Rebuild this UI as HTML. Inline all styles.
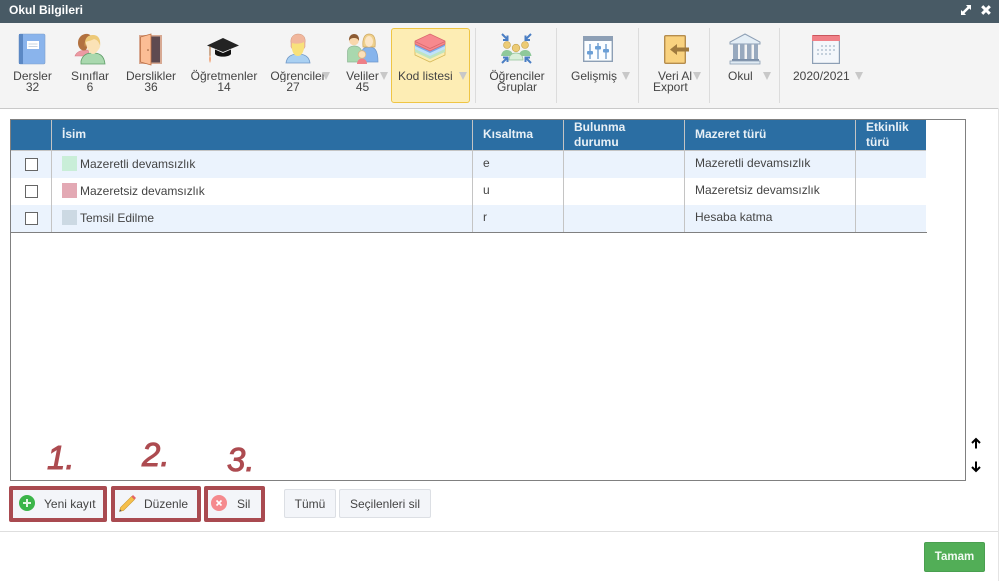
<!DOCTYPE html>
<html><head><meta charset="utf-8"><style>
html,body{margin:0;padding:0;background:#fff}
body{width:999px;height:581px;position:relative;overflow:hidden;font-family:"Liberation Sans",sans-serif;font-size:12px;color:#333}
.a{position:absolute;white-space:nowrap}
svg{position:absolute;overflow:visible}
.l{position:absolute;white-space:nowrap;line-height:11px;text-align:center;color:#444}
.tri{position:absolute;width:0;height:0;border-left:4.5px solid transparent;border-right:4.5px solid transparent;border-top:8px solid #c8c8c8}
.sep{position:absolute;top:28px;height:75px;width:1px;background:#dcdcdc}
.th{position:absolute;color:#e8f0f6;font-weight:bold;line-height:15px;font-size:12px;white-space:nowrap}
.cell{position:absolute;white-space:nowrap;line-height:14px;color:#444}
.vd{position:absolute;width:1px;background:#c4c4c4}
.cb{position:absolute;left:25px;width:11px;height:11px;border:1px solid #666;background:#fff}
.sw{position:absolute;left:62px;width:15px;height:15px}
.btn{position:absolute;top:489px;height:29px;box-sizing:border-box;background:#f3f5f9;border:1px solid #dcdfe4;border-radius:2px;line-height:28px;text-align:center;color:#444}
.red{position:absolute;box-sizing:border-box;border:4px solid #a94a50;border-radius:2px;background:#f3f5f9;top:486px;height:36px}
.num{position:absolute;color:#ad4b50;font-size:33px;font-style:italic;line-height:33px;white-space:nowrap;font-family:"Liberation Sans",sans-serif;-webkit-text-stroke:1px #ad4b50}
</style></head><body>

<div class="a" style="left:0;top:0;width:999px;height:23px;background:#485a65"></div>
<div class="a" style="left:9px;top:3px;color:#fff;font-weight:bold;line-height:14px">Okul Bilgileri</div>
<svg style="left:961px;top:5px" width="10" height="10" viewBox="0 0 10 10"><path d="M5 0H10V5L8.300 3.500L3.500 8.300L5 10H0V5L1.700 6.500L6.500 1.700Z" fill="#fff"/></svg>
<svg style="left:981px;top:5px" width="10" height="10" viewBox="0 0 10 10"><path d="M1.200 1.200L8.800 8.800M8.800 1.200L1.200 8.800" stroke="#fff" stroke-width="3"/></svg>

<div class="a" style="left:0;top:23px;width:999px;height:85px;background:#f4f4f4"></div>
<div class="a" style="left:0;top:108px;width:999px;height:1px;background:#c9c9c9"></div>
<div class="a" style="left:998px;top:108px;width:1px;height:473px;background:#e4e4e4"></div>

<!-- Dersler -->
<svg style="left:19px;top:34px" width="26" height="30" viewBox="0 0 26 30"><rect x="0" y="0" width="26" height="30" rx="1.500" fill="#8ab4ec" stroke="#7f9fca" stroke-width=".6"/><rect x="0" y="0" width="4" height="30" fill="#5b88c4"/><rect x="8" y="7" width="12" height="8" fill="#fff"/><path d="M9.500 10H18.500M9.500 12.500H18.500" stroke="#c9d5e2"/></svg>
<!-- Siniflar -->
<svg style="left:74px;top:33px" width="32" height="32" viewBox="0 0 32 32"><path d="M1 23C3 18 8 17 14 17L16 23Z" fill="#ec9aa3" stroke="#d77f88" stroke-width=".6"/><path d="M4 10C4 3 10 0 14 1C18 2 19 7 16 9L12 17C8 19 4 15 4 10Z" fill="#b2713f"/><path d="M7 28C9 21 14 20 19 20C25 20 30 22 31 31H7Z" fill="#a9d8ae" stroke="#5f9e68" stroke-width=".8"/><path d="M12 11C11 5 14 3 18 3C23 3 26 6 25 12L26 14C25 16 22 21 19 21C16 21 13 16 12 11Z" fill="#fbe2b6"/><path d="M11 14C10 5 14 2 19 2C25 2 27 7 26 14C25 8 23 7 20 6C17 8 13 8 12 9Z" fill="#edc978"/></svg>
<!-- Derslikler -->
<svg style="left:139px;top:33px" width="24" height="32" viewBox="0 0 24 32"><rect x="0" y="2" width="23" height="29" fill="#d7a993"/><rect x="12" y="3.500" width="9" height="26" fill="#5e4a50"/><path d="M1.500 4L12 1V32L1.500 29Z" fill="#fbbd95" stroke="#bc6e42" stroke-width=".8"/><circle cx="9" cy="17" r=".8" fill="#8b5431"/></svg>
<!-- Ogretmenler -->
<svg style="left:207px;top:38px" width="32" height="26" viewBox="0 0 32 26"><path d="M16 0L32 7.500L16 14L0 7.500Z" fill="#232323"/><path d="M8 11.500V16C10 19.500 22 19.500 24 16V11.500L16 15Z" fill="#111"/><path d="M3 8.500V18" stroke="#b07d50" stroke-width="1.200"/><path d="M3 17C1.500 20 2 23 3 25C4 23 4.500 20 3 17Z" fill="#f0a77d"/></svg>
<!-- Ogrenciler -->
<svg style="left:285px;top:34px" width="26" height="30" viewBox="0 0 26 30"><path d="M1 29C2 22 7 20 13 20C19 20 24 22 25 29Z" fill="#a9d0f2" stroke="#6f97c6" stroke-width=".8"/><path d="M6 9C5 3 9 0 13 0C18 0 21 3 20 9L20 13L18 16H8L6 13Z" fill="#f1b79d" stroke="#d0957b" stroke-width=".5"/><path d="M7 9C10 10 16 10 19 8C20 14 18 22 13 22C8 22 6 15 7 9Z" fill="#f8e17b"/></svg>
<!-- Veliler -->
<svg style="left:347px;top:34px" width="32" height="30" viewBox="0 0 32 30"><path d="M.5 28V17C1 13.500 4 12 7 12C11 12 14 14 15 18V28Z" fill="#a9d8ae" stroke="#8fb796" stroke-width=".7"/><path d="M15 28V17C16 14 19 13 22 13C27 13 31 15 31 28Z" fill="#86b4ec" stroke="#6e97cb" stroke-width=".7"/><circle cx="7" cy="6.500" r="4.800" fill="#f9d7ac"/><path d="M2 7C1.500 1.500 5 0 7 0C10 0 12.500 2 12 7C11 4.500 9 4 7 4C5 4 3 4.500 2 7Z" fill="#8c5b33"/><path d="M16 13C15 4 18 0 22 0C27 0 29 4 28 13Z" fill="#eed08c" stroke="#cda55e" stroke-width=".7"/><ellipse cx="22" cy="7.500" rx="4" ry="5.500" fill="#fce6c6"/><path d="M10 30C10 26 13 24.500 15 24.500C17 24.500 20 26 20 30Z" fill="#ee7f87"/><circle cx="15" cy="20.500" r="3.800" fill="#fbe0ba" stroke="#d9b683" stroke-width=".8"/></svg>

<!-- Kod listesi highlight -->
<div class="a" style="left:391px;top:28px;width:77px;height:73px;background:#fdedb4;border:1px solid #efc544;border-radius:3px"></div>
<svg style="left:414px;top:34px" width="32" height="29" viewBox="0 0 32 29"><polygon points="1,8 16,15 31,8 31,21 16,28 1,21" fill="#fbedb0" stroke="#d6b95a" stroke-width=".8"/><polygon points="1,8 16,15 31,8 31,18 16,25 1,18" fill="#bfe4c0"/><polygon points="1,8 16,15 31,8 31,15 16,22 1,15" fill="#bfe1fb"/><polygon points="1,8 16,15 31,8 31,12 16,19 1,12" fill="#7ea9e8"/><polygon points="16,0 31,7 31,10 16,17 1,10 1,7" fill="#f7898e" stroke="#d9686e" stroke-width=".7"/><path d="M1 7.500L16 14.500L31 7.500" fill="none" stroke="#d9686e" stroke-width=".8"/></svg>

<!-- Grup -->
<svg style="left:501px;top:34px" width="31" height="30" viewBox="0 0 31 30"><path d="M1 0L6.500 5.500M6.500 1.500V6H2M30 0L24.500 5.500M24.500 1.500V6H29M1 29L6.500 23.500M2 23.500H6.500V28M30 29L24.500 23.500M29 23.500H24.500V28" fill="none" stroke="#4a7ec4" stroke-width="2"/><circle cx="6" cy="11" r="3.500" fill="#eccb75" stroke="#c4a24d" stroke-width=".6"/><circle cx="24" cy="11" r="3.500" fill="#eccb75" stroke="#c4a24d" stroke-width=".6"/><circle cx="15" cy="14" r="3.800" fill="#eccb75" stroke="#c4a24d" stroke-width=".6"/><path d="M0 22C1 17 3.500 16 6 16C9 16 12 18 12 22ZM18 22C18 18 21 16 24 16C27 16 29.500 17 30.500 22Z" fill="#8fc99a"/><path d="M8 26C8 21 11.500 19 15 19C18.500 19 22 21 22 26Z" fill="#d9efd9" stroke="#92c29a" stroke-width=".7"/></svg>

<!-- Gelismis -->
<svg style="left:583px;top:36px" width="30" height="26" viewBox="0 0 30 26"><rect x=".7" y=".7" width="28.600" height="24.600" fill="#fbfdff" stroke="#8d9fb5" stroke-width="1.400"/><rect x="0" y="0" width="30" height="5" fill="#8d9fb5"/><path d="M7 8V23M15 7V23M23 8V23" stroke="#5b8ec6" stroke-width="1.200"/><rect x="4" y="15" width="6" height="3.500" rx="1" fill="#6b9fd6"/><rect x="12" y="10" width="6" height="3.500" rx="1" fill="#6b9fd6"/><rect x="20" y="13" width="6" height="3.500" rx="1" fill="#6b9fd6"/></svg>

<!-- Veri Al -->
<svg style="left:664px;top:35px" width="26" height="29" viewBox="0 0 26 29"><rect x=".7" y=".7" width="20.600" height="27.600" rx="1" fill="#f9d27f" stroke="#b58d4e" stroke-width="1.400"/><path d="M6 14.500L13 9V12.500H25V16.500H13V20Z" fill="#a07a3e"/></svg>

<!-- Okul -->
<svg style="left:729px;top:33px" width="32" height="32" viewBox="0 0 32 32"><path d="M16 1L31 9V11H1V9Z" fill="#e4eef6" stroke="#8d9fb5" stroke-width="1"/><rect x="4" y="11" width="5" height="15" fill="#98a9be"/><rect x="11" y="11" width="4.500" height="15" fill="#98a9be"/><rect x="18" y="11" width="4.500" height="15" fill="#98a9be"/><rect x="25" y="11" width="4" height="15" fill="#98a9be"/><rect x="3" y="26" width="27" height="2" fill="#7b8fa8"/><rect x="1" y="28" width="30" height="3" fill="#dfeaf3" stroke="#8d9fb5" stroke-width=".8"/></svg>

<!-- Takvim -->
<svg style="left:812px;top:35px" width="28" height="29" viewBox="0 0 28 29"><rect x=".6" y=".6" width="26.800" height="27.800" fill="#f4f7fb" stroke="#8d9fb5" stroke-width="1.200"/><rect x="0" y="0" width="28" height="6" fill="#f08087"/><path d="M1 .5H27" stroke="#c9565d"/><g fill="#c4d0dc"><rect x="9" y="10" width="2" height="2"/><rect x="13" y="10" width="2" height="2"/><rect x="17" y="10" width="2" height="2"/><rect x="21" y="10" width="2" height="2"/><rect x="5" y="14" width="2" height="2"/><rect x="9" y="14" width="2" height="2"/><rect x="13" y="14" width="2" height="2"/><rect x="17" y="14" width="2" height="2"/><rect x="21" y="14" width="2" height="2"/><rect x="5" y="18" width="2" height="2"/><rect x="9" y="18" width="2" height="2"/><rect x="13" y="18" width="2" height="2"/><rect x="17" y="18" width="2" height="2"/></g></svg>

<!-- toolbar labels -->
<div class="l" style="left:12px;top:71px;width:41px">Dersler<br>32</div>
<div class="l" style="left:70px;top:71px;width:40px">Sınıflar<br>6</div>
<div class="l" style="left:125px;top:71px;width:52px">Derslikler<br>36</div>
<div class="l" style="left:189px;top:71px;width:70px">Öğretmenler<br>14</div>
<div class="l" style="left:270px;top:71px;width:56px;overflow:hidden">Öğrenciler</div>
<div class="l" style="left:270px;top:82px;width:46px">27</div>
<div class="tri" style="left:322px;top:72px"></div>
<div class="l" style="left:346px;top:71px;width:33px">Veliler<br>45</div>
<div class="tri" style="left:380px;top:72px"></div>
<div class="l" style="left:398px;top:71px">Kod listesi</div>
<div class="tri" style="left:459px;top:72px"></div>
<div class="l" style="left:487px;top:71px;width:60px">Öğrenciler<br>Gruplar</div>
<div class="l" style="left:571px;top:71px">Gelişmiş</div>
<div class="tri" style="left:622px;top:72px"></div>
<div class="l" style="left:658px;top:71px">Veri Al</div>
<div class="l" style="left:653px;top:82px">Export</div>
<div class="tri" style="left:693px;top:72px"></div>
<div class="l" style="left:728px;top:71px">Okul</div>
<div class="tri" style="left:763px;top:72px"></div>
<div class="l" style="left:793px;top:71px">2020/2021</div>
<div class="tri" style="left:855px;top:72px"></div>

<div class="sep" style="left:475px"></div>
<div class="sep" style="left:556px"></div>
<div class="sep" style="left:638px"></div>
<div class="sep" style="left:709px"></div>
<div class="sep" style="left:779px"></div>

<!-- grid -->
<div class="a" style="left:10px;top:119px;width:954px;height:360px;border:1px solid #808080"></div>
<div class="a" style="left:11px;top:120px;width:915px;height:30px;background:#2b6ea3"></div>
<div class="a" style="left:11px;top:150px;width:915px;height:1px;background:#c4c4c4"></div>
<div class="a" style="left:11px;top:151px;width:915px;height:27px;background:#ebf3fd"></div>
<div class="a" style="left:11px;top:205px;width:915px;height:27px;background:#ebf3fd"></div>
<div class="a" style="left:11px;top:232px;width:916px;height:1px;background:#808080"></div>
<div class="vd" style="left:51px;top:120px;height:112px"></div>
<div class="vd" style="left:472px;top:120px;height:112px"></div>
<div class="vd" style="left:563px;top:120px;height:112px"></div>
<div class="vd" style="left:684px;top:120px;height:112px"></div>
<div class="vd" style="left:855px;top:120px;height:112px"></div>

<div class="th" style="left:62px;top:127px">İsim</div>
<div class="th" style="left:483px;top:127px">Kısaltma</div>
<div class="th" style="left:574px;top:120px">Bulunma<br>durumu</div>
<div class="th" style="left:695px;top:127px">Mazeret türü</div>
<div class="th" style="left:866px;top:120px">Etkinlik<br>türü</div>

<div class="cb" style="top:158px"></div>
<div class="cb" style="top:185px"></div>
<div class="cb" style="top:212px"></div>
<div class="sw" style="top:156px;background:#c9eed8"></div>
<div class="sw" style="top:183px;background:#e3a9b4"></div>
<div class="sw" style="top:210px;background:#ccd9e3"></div>

<div class="cell" style="left:80px;top:157px">Mazeretli devamsızlık</div>
<div class="cell" style="left:80px;top:184px">Mazeretsiz devamsızlık</div>
<div class="cell" style="left:80px;top:211px">Temsil Edilme</div>
<div class="cell" style="left:483px;top:156px">e</div>
<div class="cell" style="left:483px;top:183px">u</div>
<div class="cell" style="left:483px;top:210px">r</div>
<div class="cell" style="left:695px;top:156px">Mazeretli devamsızlık</div>
<div class="cell" style="left:695px;top:183px">Mazeretsiz devamsızlık</div>
<div class="cell" style="left:695px;top:210px">Hesaba katma</div>

<!-- arrows -->
<svg style="left:971px;top:438px" width="10" height="11" viewBox="0 0 10 11"><path d="M5 10.500V1.500M1 5L5 1L9 5" fill="none" stroke="#000" stroke-width="2"/></svg>
<svg style="left:971px;top:461px" width="10" height="11" viewBox="0 0 10 11"><path d="M5 .5V9.500M1 6L5 10L9 6" fill="none" stroke="#000" stroke-width="2"/></svg>

<!-- annotations -->
<div class="num" style="left:47px;top:441px">1.</div>
<div class="num" style="left:142px;top:438px">2.</div>
<div class="num" style="left:227px;top:443px">3.</div>

<!-- red-framed buttons -->
<div class="red" style="left:9px;width:98px"></div>
<div class="red" style="left:111px;width:90px"></div>
<div class="red" style="left:204px;width:61px"></div>

<svg style="left:19px;top:495px" width="16" height="16" viewBox="0 0 16 16"><circle cx="8" cy="8" r="8" fill="#3cb54a"/><path d="M8 4V12M4 8H12" stroke="#e4f6e4" stroke-width="2"/></svg>
<div class="a" style="left:44px;top:497px;line-height:14px;color:#444">Yeni kayıt</div>
<svg style="left:119px;top:495px" width="17" height="17" viewBox="0 0 17 17"><path d="M12.500 1.500L15.500 4.500L4.500 15.500L.5 16.500L1.500 12.500Z" fill="#f6bf4a" stroke="#c99a34" stroke-width=".6"/><path d="M12.500 1.500L14 0L17 3L15.500 4.500Z" fill="#e6636a"/><path d="M.5 16.500L1 14.300L2.700 16Z" fill="#555"/></svg>
<div class="a" style="left:144px;top:497px;line-height:14px;color:#444">Düzenle</div>
<svg style="left:211px;top:495px" width="16" height="16" viewBox="0 0 16 16"><circle cx="8" cy="8" r="8" fill="#f58a8e"/><path d="M5.500 5.500L10.500 10.500M10.500 5.500L5.500 10.500" stroke="#fff" stroke-width="1.600"/></svg>
<div class="a" style="left:237px;top:497px;line-height:14px;color:#444">Sil</div>

<div class="btn" style="left:284px;width:52px">Tümü</div>
<div class="btn" style="left:339px;width:92px">Seçilenleri sil</div>

<div class="a" style="left:0;top:531px;width:998px;height:1px;background:#dedede"></div>
<div class="a" style="left:924px;top:542px;width:61px;height:30px;box-sizing:border-box;background:#52ae57;border:1px solid #4a9f50;border-radius:2px;color:#f2fbf2;font-weight:bold;text-align:center;line-height:28px;font-size:11.500px">Tamam</div>

</body></html>
